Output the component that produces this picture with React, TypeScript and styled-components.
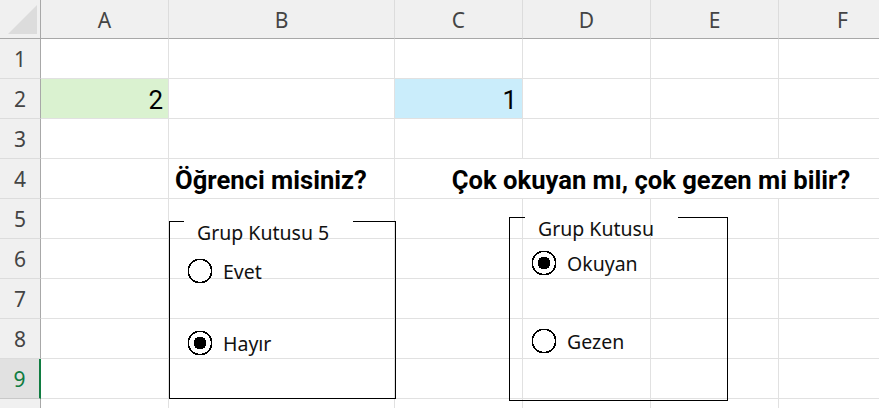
import React from "react";
import styled, { createGlobalStyle } from "styled-components";

const GlobalStyle = createGlobalStyle`
  html, body {
    margin: 0;
    padding: 0;
    background: #ffffff;
    overflow: hidden;
  }
`;

const COLS = [
  { name: "A", width: 128 },
  { name: "B", width: 226 },
  { name: "C", width: 128 },
  { name: "D", width: 128 },
  { name: "E", width: 128 },
  { name: "F", width: 128 },
];
// row 10 only peeks in at the bottom edge, its number is below the fold
const ROWS = [1, 2, 3, 4, 5, 6, 7, 8, 9, 10];
const VISIBLE_LABELS = 9;
const SELECTED_ROW = 9;

type CellData = {
  value: string;
  align?: "left" | "right" | "center";
  fill?: string;
  bold?: boolean;
  span?: number;
};

const cells: Record<string, CellData> = {
  A2: { value: "2", align: "right", fill: "#daf2d0" },
  C2: { value: "1", align: "right", fill: "#caedfb" },
  B4: { value: "Öğrenci misiniz?", bold: true },
  C4: { value: "Çok okuyan mı, çok gezen mi bilir?", bold: true, align: "center", span: 4 },
};

const App = () => {
  return (
    <>
      <GlobalStyle />
      <Sheet>
        <Grid>
          <Corner>
            <CornerTriangle />
          </Corner>
          {COLS.map((c) => (
            <ColHeader key={c.name}>{c.name}</ColHeader>
          ))}
          {ROWS.map((r) => {
            const out: React.ReactNode[] = [
              <RowHeader key={"h" + r} $selected={r === SELECTED_ROW}>
                {r <= VISIBLE_LABELS ? r : ""}
              </RowHeader>,
            ];
            let skip = 0;
            COLS.forEach((c) => {
              if (skip > 0) {
                skip--;
                return;
              }
              const data = cells[c.name + r];
              if (data?.span) skip = data.span - 1;
              out.push(
                <Cell
                  key={c.name + r}
                  $fill={data?.fill}
                  $align={data?.align || "left"}
                  $span={data?.span || 1}
                >
                  {data && <CellText $bold={data.bold}>{data.value}</CellText>}
                </Cell>
              );
            });
            return out;
          })}
        </Grid>

        <GroupBox $left={169} $top={221} $width={227} $height={178}>
          <TopEdge>
            <EdgeLine $width={15} />
            <Caption>Grup Kutusu 5</Caption>
            <EdgeLine />
          </TopEdge>
          <Options $offset={13} $gap={46} $pad={17}>
            <Radio label="Evet" />
            <Radio label="Hayır" checked />
          </Options>
        </GroupBox>

        <GroupBox $left={509} $top={217} $width={219} $height={184}>
          <TopEdge>
            <EdgeLine $width={16} />
            <Caption>Grup Kutusu</Caption>
            <EdgeLine />
          </TopEdge>
          <Options $offset={9} $gap={52} $pad={21}>
            <Radio label="Okuyan" checked />
            <Radio label="Gezen" />
          </Options>
        </GroupBox>
      </Sheet>
    </>
  );
};

function Radio({ label, checked }: { label: string; checked?: boolean }) {
  return (
    <RadioRow>
      <svg width="26" height="26" viewBox="0 0 26 26" shapeRendering="crispEdges">
        <circle cx="13" cy="13" r="11.6" fill="#fff" stroke="#000" strokeWidth="1.6" />
        {checked && <circle cx="13" cy="13" r="6.4" fill="#000" />}
      </svg>
      <RadioLabel>{label}</RadioLabel>
    </RadioRow>
  );
}

export default App;

const Sheet = styled.div`
  position: relative;
  width: 879px;
  height: 408px;
  overflow: hidden;
  background: #fff;
`;

const Grid = styled.div`
  display: grid;
  grid-template-columns: 41px ${COLS.map((c) => c.width + "px").join(" ")};
  grid-template-rows: 39px repeat(${ROWS.length}, 40px);
  width: max-content;
`;

const Corner = styled.div`
  background: #f0f0f0;
  border-right: 1px solid #a8a8a8;
  border-bottom: 1px solid #a8a8a8;
  box-sizing: border-box;
  display: flex;
  align-items: flex-end;
  justify-content: flex-end;
  padding: 0 3px 4px 0;
`;

const CornerTriangle = styled.div`
  width: 29px;
  height: 29px;
  background: #dcdcdc;
  clip-path: polygon(100% 0, 100% 100%, 0 100%);
`;

const ColHeader = styled.div`
  background: #f0f0f0;
  border-right: 1px solid #dcdcdc;
  border-bottom: 1px solid #a8a8a8;
  box-sizing: border-box;
  display: flex;
  align-items: center;
  justify-content: center;
  padding-top: 2px;
  font-family: "Noto Sans", "Open Sans", sans-serif;
  font-size: 21px;
  color: #444;
`;

const RowHeader = styled.div<{ $selected?: boolean }>`
  background: ${(p) => (p.$selected ? "#e1e1e1" : "#f0f0f0")};
  border-right: ${(p) => (p.$selected ? "2px solid #107c41" : "1px solid #a8a8a8")};
  border-bottom: 1px solid ${(p) => (p.$selected ? "#c8c8c8" : "#dcdcdc")};
  box-sizing: border-box;
  display: flex;
  align-items: center;
  justify-content: center;
  font-family: "Noto Sans", "Open Sans", sans-serif;
  font-size: 21px;
  color: ${(p) => (p.$selected ? "#107c41" : "#444")};
`;

const Cell = styled.div<{ $fill?: string; $align: string; $span: number }>`
  grid-column: span ${(p) => p.$span};
  background: ${(p) => p.$fill || "#fff"};
  border-right: 1px solid #e1e1e1;
  border-bottom: 1px solid #e1e1e1;
  box-sizing: border-box;
  display: flex;
  align-items: flex-end;
  justify-content: ${(p) =>
    p.$align === "right" ? "flex-end" : p.$align === "center" ? "center" : "flex-start"};
  padding: 0 5px 3px 6px;
  white-space: nowrap;
  overflow: visible;
`;

const CellText = styled.span<{ $bold?: boolean }>`
  font-family: Roboto, "Liberation Sans", sans-serif;
  font-size: ${(p) => (p.$bold ? "25.6px" : "26px")};
  font-weight: ${(p) => (p.$bold ? 700 : 400)};
  line-height: 30px;
  color: #000;
`;

const GroupBox = styled.div<{
  $left: number;
  $top: number;
  $width: number;
  $height: number;
}>`
  position: absolute;
  left: ${(p) => p.$left}px;
  top: ${(p) => p.$top}px;
  width: ${(p) => p.$width}px;
  height: ${(p) => p.$height}px;
  box-sizing: border-box;
  border: 1px solid #000;
  border-top: none;
  display: flex;
  flex-direction: column;
`;

const TopEdge = styled.div`
  display: flex;
  align-items: flex-start;
  margin: 0 -1px;
`;

const EdgeLine = styled.div<{ $width?: number }>`
  border-top: 1px solid #000;
  ${(p) => (p.$width ? `width: ${p.$width}px;` : "flex: 1;")}
`;

const Caption = styled.span`
  font-family: "Noto Sans", "Open Sans", sans-serif;
  font-size: 19.5px;
  line-height: 24px;
  color: #111;
  padding: 0 24px 0 13px;
  white-space: nowrap;
`;

const Options = styled.div<{ $offset: number; $gap: number; $pad: number }>`
  display: flex;
  flex-direction: column;
  gap: ${(p) => p.$gap}px;
  margin-top: ${(p) => p.$offset}px;
  padding-left: ${(p) => p.$pad}px;
`;

const RadioRow = styled.div`
  display: flex;
  align-items: center;
  gap: 10px;
  height: 26px;
`;

const RadioLabel = styled.span`
  font-family: "Noto Sans", "Open Sans", sans-serif;
  font-size: 19.5px;
  color: #111;
`;
